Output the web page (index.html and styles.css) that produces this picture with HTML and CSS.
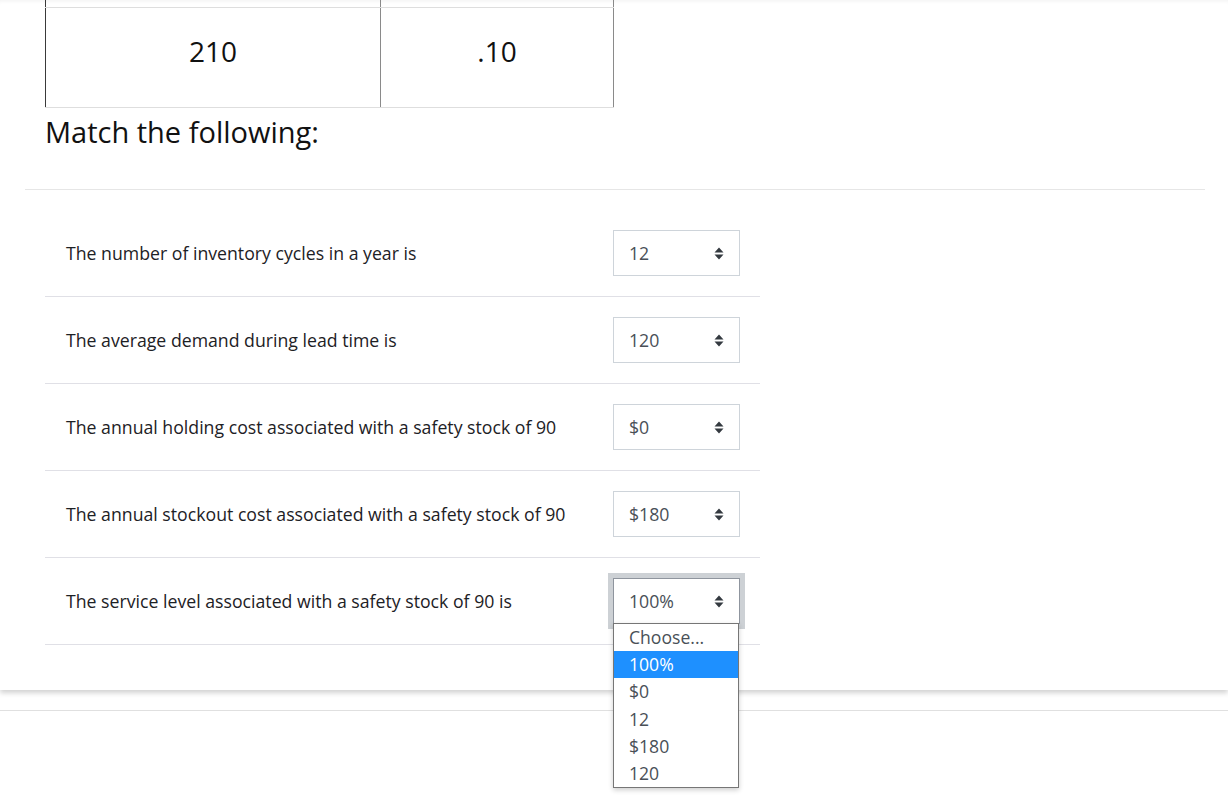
FILE: index.html
```html
<!DOCTYPE html>
<html lang="en">
<head>
<meta charset="utf-8">
<title>Match the following</title>
<link rel="stylesheet" href="styles.css">
</head>
<body>
<div class="card">
  <div class="qtext">
    <table class="data">
      <tr class="cut"><td></td><td></td></tr>
      <tr class="big"><td class="c1">210</td><td class="c2">.10</td></tr>
    </table>
    <h3 class="title">Match the following:</h3>
  </div>
  <hr class="sep">
  <div class="answer">
    <div class="row">
      <div class="q">The number of inventory cycles in a year is</div>
      <div class="sel"><span>12</span><svg class="arrow" width="10" height="13" viewBox="0 0 10 13"><path d="M0.5 5.6 L5 0.6 L9.5 5.6 Z M0.5 7.4 L9.5 7.4 L5 12.4 Z" fill="#343a40"/></svg></div>
    </div>
    <div class="row">
      <div class="q">The average demand during lead time is</div>
      <div class="sel"><span>120</span><svg class="arrow" width="10" height="13" viewBox="0 0 10 13"><path d="M0.5 5.6 L5 0.6 L9.5 5.6 Z M0.5 7.4 L9.5 7.4 L5 12.4 Z" fill="#343a40"/></svg></div>
    </div>
    <div class="row">
      <div class="q">The annual holding cost associated with a safety stock of 90</div>
      <div class="sel"><span>$0</span><svg class="arrow" width="10" height="13" viewBox="0 0 10 13"><path d="M0.5 5.6 L5 0.6 L9.5 5.6 Z M0.5 7.4 L9.5 7.4 L5 12.4 Z" fill="#343a40"/></svg></div>
    </div>
    <div class="row">
      <div class="q">The annual stockout cost associated with a safety stock of 90</div>
      <div class="sel"><span>$180</span><svg class="arrow" width="10" height="13" viewBox="0 0 10 13"><path d="M0.5 5.6 L5 0.6 L9.5 5.6 Z M0.5 7.4 L9.5 7.4 L5 12.4 Z" fill="#343a40"/></svg></div>
    </div>
    <div class="row">
      <div class="q">The service level associated with a safety stock of 90 is</div>
      <div class="sel focus"><span>100%</span><svg class="arrow" width="10" height="13" viewBox="0 0 10 13"><path d="M0.5 5.6 L5 0.6 L9.5 5.6 Z M0.5 7.4 L9.5 7.4 L5 12.4 Z" fill="#343a40"/></svg></div>
    </div>
  </div>
</div>
<div class="footer"></div>
<ul class="dropdown">
  <li>Choose...</li>
  <li class="hl">100%</li>
  <li>$0</li>
  <li>12</li>
  <li>$180</li>
  <li>120</li>
</ul>
</body>
</html>
```

FILE: styles.css
```css
html, body {
  margin: 0;
  padding: 0;
  background: #fff;
  font-family: "Open Sans", "Noto Sans", sans-serif;
  color: #1d2125;
}

.card {
  background: #fff;
  padding: 0 23px 45px 25px;
  box-shadow: 0 3px 5px rgba(0, 0, 0, 0.18), inset 0 4px 4px -3px rgba(0, 0, 0, 0.06);
  position: relative;
  z-index: 1;
}

.qtext {
  padding-left: 20px;
}

.data {
  border-collapse: collapse;
  width: 569px;
  border-left: 1px solid #3a3a3a;
}

.data td {
  border-left: 1px solid #8a8a8a;
  border-right: 1px solid #8a8a8a;
  text-align: center;
  padding: 0;
  font-size: 28px;
  color: #111;
}

.data td:first-child {
  border-left: 1px solid #3a3a3a;
}

.data .cut td {
  height: 7px;
  border-bottom: 1px solid #dedede;
}

.data .big td {
  height: 85px;
  padding-bottom: 14px;
  border-bottom: 1px solid #dedede;
}

.data .c1 {
  width: 334px;
}

.title {
  margin: 6px 0 40px 0;
  font-size: 29px;
  font-weight: 400;
  line-height: 35px;
  color: #111;
}

.sep {
  margin: 0;
  border: 0;
  border-top: 1px solid #e6e6e6;
}

.answer {
  margin: 20px 0 0 20px;
  width: 715px;
}

.row {
  display: flex;
  align-items: center;
  justify-content: space-between;
  padding: 20px 20px 20px 21px;
  border-bottom: 1px solid #e0e0e6;
}

.q {
  font-size: 17.7px;
  color: #1d2125;
}

.sel {
  box-sizing: border-box;
  width: 127px;
  height: 46px;
  border: 1px solid #ced4da;
  display: flex;
  align-items: center;
  justify-content: space-between;
  padding: 0 15px 0 15px;
  font-size: 17.7px;
  color: #495057;
  background: #fff;
}

.sel.focus {
  border-color: #8f959e;
  box-shadow: 0 0 0 5px #cdd1d5;
}

.footer {
  margin-top: 20px;
  border-top: 1px solid #e0e0e0;
  height: 86px;
}

.dropdown {
  position: absolute;
  left: 613px;
  top: 623px;
  width: 124px;
  margin: 0;
  padding: 0;
  list-style: none;
  border: 1px solid #767676;
  background: #fff;
  box-shadow: 0 2px 5px rgba(0, 0, 0, 0.2);
  z-index: 5;
}

.dropdown li {
  height: 27.2px;
  line-height: 27.2px;
  padding-left: 15px;
  font-size: 17.6px;
  color: #495057;
}

.dropdown li.hl {
  background: #1e90ff;
  color: #fff;
}
```
